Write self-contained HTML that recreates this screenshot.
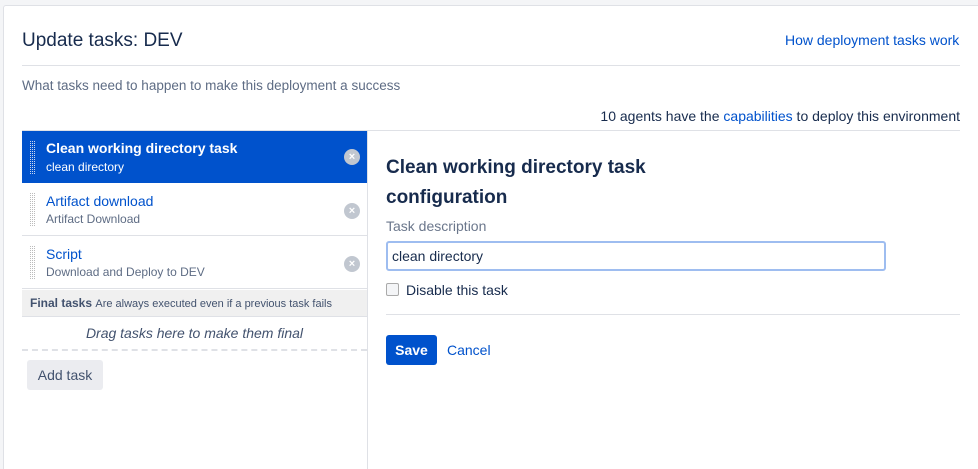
<!DOCTYPE html>
<html style="overflow:hidden;height:469px"><head><style>
body{margin:0;width:978px;height:469px;background:#f4f5f7;font-family:"Liberation Sans",sans-serif;overflow:hidden;position:relative;color:#172b4d}
.panel{position:absolute;left:3px;top:5px;width:980px;height:470px;background:#fff;border:1px solid #dfe1e6;border-bottom:none;border-radius:3px}
.a{position:absolute;white-space:nowrap}
a{color:#0052cc;text-decoration:none}
.item{position:absolute;left:22px;width:345px;height:52px;border-bottom:1px solid #dfe1e6}
.grip{position:absolute;left:8px;top:9px;width:6px;height:34px;background:repeating-linear-gradient(90deg,#bbb 0 1px,transparent 1px 2px);-webkit-mask:repeating-linear-gradient(0deg,#000 0 1px,transparent 1px 2px);mask:repeating-linear-gradient(0deg,#000 0 1px,transparent 1px 2px)}
.t1{position:absolute;left:24px;top:10px;font-size:14px;color:#0052cc}
.t2{position:absolute;left:24px;top:29px;font-size:12px;color:#5e6c84}
.x{position:absolute;left:322px;top:20px;width:16px;height:16px;border-radius:50%;background:#c1c7d0;color:#fff;font-size:11px;line-height:16px;text-align:center;font-weight:bold}
</style></head><body>
<div class="panel"></div>
<div class="a" style="left:22px;top:30px;font-size:19px;color:#172b4d">Update tasks: DEV</div>
<div class="a" style="left:785px;top:32px;font-size:14px"><a>How deployment tasks work</a></div>
<div class="a" style="left:22px;top:65px;width:938px;height:1px;background:#dfe1e6"></div>
<div class="a" style="left:22px;top:78px;font-size:13.5px;color:#5e6c84">What tasks need to happen to make this deployment a success</div>
<div class="a" style="right:18px;top:108px;font-size:14px;color:#172b4d">10 agents have the <a>capabilities</a> to deploy this environment</div>
<div class="a" style="left:22px;top:130px;width:938px;height:1px;background:#dfe1e6"></div>
<div class="a" style="left:367px;top:130px;width:1px;height:340px;background:#dfe1e6"></div>
<div class="item" style="top:131px;background:#0052cc;border:none;height:52px">
<div class="grip" style="background:repeating-linear-gradient(90deg,#c8d6f2 0 1px,transparent 1px 2px)"></div>
<div class="t1" style="color:#fff;font-weight:bold;top:9px">Clean working directory task</div>
<div class="t2" style="color:#fff">clean directory</div>
<div class="x" style="top:18px">×</div></div>
<div class="item" style="top:183px"><div class="grip"></div><div class="t1">Artifact download</div><div class="t2">Artifact Download</div><div class="x">×</div></div>
<div class="item" style="top:236px"><div class="grip"></div><div class="t1">Script</div><div class="t2">Download and Deploy to DEV</div><div class="x">×</div></div>
<div class="a" style="left:22px;top:290px;width:345px;height:26px;background:#f0f0f0;border-bottom:1px solid #dfe1e6;font-size:12px;color:#42526e;line-height:26px"><span style="padding-left:8px;font-weight:bold">Final tasks</span> <span style="font-size:11px">Are always executed even if a previous task fails</span></div>
<div class="a" style="left:22px;top:325px;width:345px;text-align:center;font-size:14px;font-style:italic;color:#42526e">Drag tasks here to make them final</div>
<div class="a" style="left:22px;top:349px;width:345px;border-top:2px dashed #dfe1e6"></div>
<div class="a" style="left:27px;top:360px;width:76px;height:30px;background:#ebecf0;border-radius:3px;font-size:14px;line-height:30px;text-align:center;color:#42526e">Add task</div>
<div class="a" style="left:386px;top:153px;font-size:19px;font-weight:bold;line-height:30px;color:#172b4d">Clean working directory task<br>configuration</div>
<div class="a" style="left:386px;top:218px;font-size:14px;color:#6b778c">Task description</div>
<div class="a" style="left:386px;top:241px;height:26px;border:2px solid #9ebdf0;border-radius:3px;font-size:14px;line-height:26px;padding-left:4px;width:492px">clean directory</div>
<div class="a" style="left:386px;top:283px;width:11px;height:11px;border:1px solid #aaa;border-radius:2px;background:#f4f5f7"></div>
<div class="a" style="left:406px;top:282px;font-size:14px">Disable this task</div>
<div class="a" style="left:386px;top:314px;width:574px;height:1px;background:#dfe1e6"></div>
<div class="a" style="left:386px;top:335px;width:51px;height:30px;background:#0052cc;border-radius:3px;color:#fff;font-weight:bold;font-size:14px;line-height:30px;text-align:center">Save</div>
<div class="a" style="left:447px;top:342px;font-size:14px"><a>Cancel</a></div>
</body></html>
